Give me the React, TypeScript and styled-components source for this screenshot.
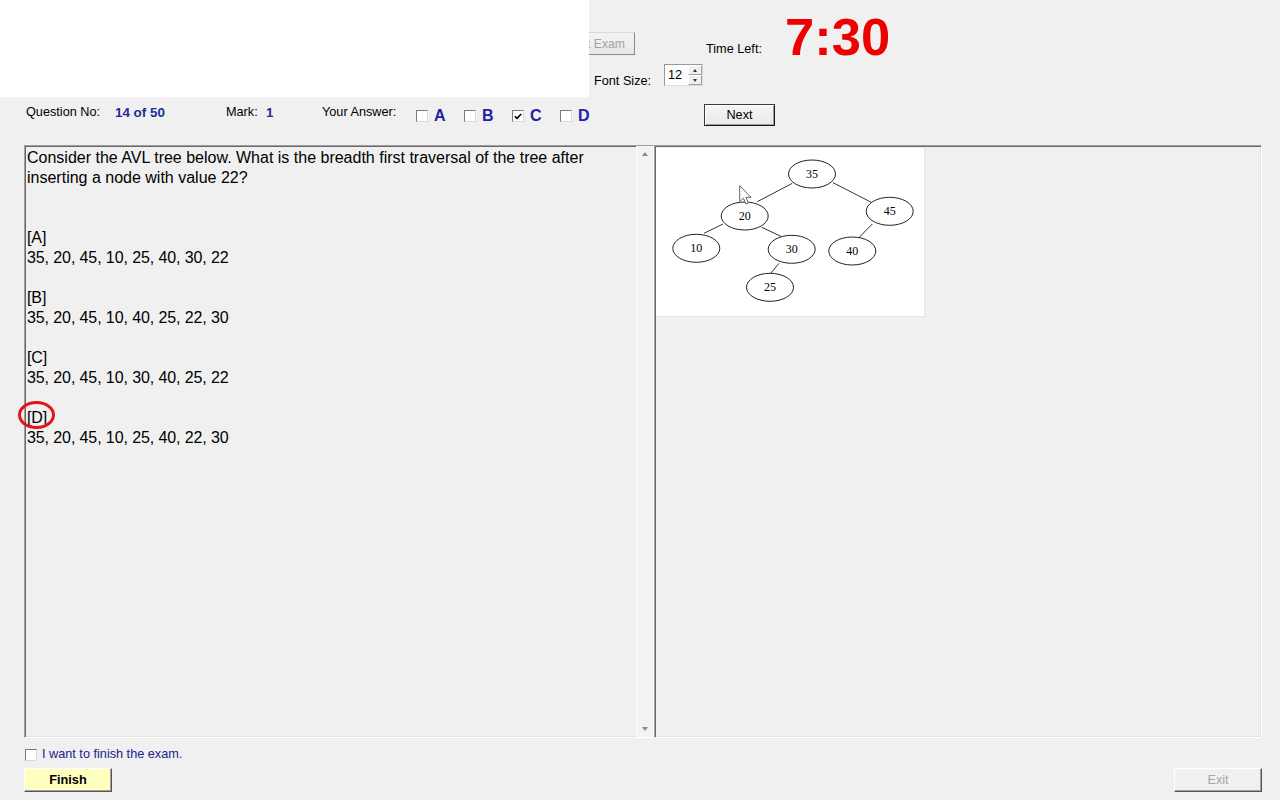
import React from "react";
import styled, { createGlobalStyle } from "styled-components";

const Global = createGlobalStyle`
  html, body { margin: 0; padding: 0; background: #f0f0f0; }
  body { font-family: "Liberation Sans", Arial, sans-serif; color: #000; }
`;

const Page = styled.div`
  width: 1280px;
  height: 800px;
  background: #f0f0f0;
  display: flex;
  flex-direction: column;
  overflow: hidden;
  font-size: 12.7px;
`;

const TopBar = styled.div`
  display: flex;
  height: 97px;
  flex: none;
`;

const WhitePanel = styled.div`
  width: 589px;
  height: 97px;
  background: #fff;
  flex: none;
`;

const ControlsA = styled.div`
  width: 117px;
  display: flex;
  flex-direction: column;
  flex: none;
`;

const StartClip = styled.div`
  margin-top: 32px;
  height: 23px;
  width: 46px;
  box-sizing: border-box;
  overflow: hidden;
  display: flex;
  justify-content: flex-end;
  align-items: center;
  padding-right: 9px;
  border-top: 1px solid #d8d8d8;
  border-right: 1px solid #8a8a8a;
  border-bottom: 1px solid #8a8a8a;
  background: linear-gradient(#f3f3f3, #e8e8e8);
  color: #a3a3a3;
  font-size: 12.2px;
  white-space: nowrap;
`;

const FontRow = styled.div`
  display: flex;
  align-items: flex-start;
  margin-top: 9px;
`;

const FontLabel = styled.div`
  width: 75px;
  box-sizing: border-box;
  padding-left: 5px;
  margin-top: 10px;
  line-height: 15px;
`;

const Spinner = styled.div`
  width: 39px;
  height: 22px;
  box-sizing: border-box;
  border: 1px solid;
  border-color: #9a9a9a #dcdcdc #dcdcdc #9a9a9a;
  background: #fff;
  display: flex;
`;

const SpinText = styled.div`
  flex: 1;
  padding-left: 3px;
  line-height: 20px;
`;

const SpinButtons = styled.div`
  width: 14px;
  display: flex;
  flex-direction: column;
`;

const SpinBtn = styled.div`
  flex: 1;
  display: flex;
  align-items: center;
  justify-content: center;
  background: #f0f0f0;
  border: 1px solid;
  border-color: #fff #a0a0a0 #a0a0a0 #fff;
`;

const Tri = styled.div<{ $down?: boolean }>`
  width: 0;
  height: 0;
  border-left: 2.5px solid transparent;
  border-right: 2.5px solid transparent;
  ${(p) => (p.$down ? "border-top: 3px solid #333;" : "border-bottom: 3px solid #333;")}
`;

const ControlsB = styled.div`
  display: flex;
  align-items: flex-start;
`;

const TimeLabel = styled.div`
  margin-top: 42px;
  width: 79px;
  line-height: 15px;
`;

const Clock = styled.div`
  margin-top: 11px;
  font-size: 52.5px;
  font-weight: bold;
  line-height: 52px;
  color: #ec0000;
`;

const AnswerBar = styled.div`
  display: flex;
  align-items: flex-start;
  height: 48px;
  flex: none;
  box-sizing: border-box;
  padding-top: 7px;
  padding-left: 26px;
`;

const Cell = styled.div<{ $w: number; $bold?: boolean; $blue?: boolean }>`
  width: ${(p) => p.$w}px;
  flex: none;
  line-height: 15px;
  margin-top: 1px;
  font-weight: ${(p) => (p.$bold ? "bold" : "normal")};
  font-size: ${(p) => (p.$bold ? "13.4px" : "12.7px")};
  color: ${(p) => (p.$blue ? "#1c2c9c" : "#000")};
`;

const Option = styled.div`
  width: 48px;
  flex: none;
  display: flex;
  align-items: flex-start;
`;

const Box = styled.div<{ $top?: number }>`
  width: 12px;
  height: 12px;
  box-sizing: border-box;
  margin-top: ${(p) => p.$top ?? 0}px;
  border: 1px solid;
  border-color: #7a7a7a #dadada #dadada #7a7a7a;
  background: #fff;
  display: flex;
  align-items: center;
  justify-content: center;
  flex: none;
`;

const Letter = styled.div`
  margin-left: 6px;
  margin-top: 3px;
  font-size: 16px;
  font-weight: bold;
  line-height: 18px;
  color: #1f22a3;
`;

const Spacer = styled.div<{ $w: number }>`
  width: ${(p) => p.$w}px;
  flex: none;
`;

const NextButton = styled.div`
  width: 71px;
  height: 22px;
  box-sizing: border-box;
  border: 1px solid;
  border-color: #3a3a3a #1a1a1a #1a1a1a #3a3a3a;
  box-shadow: inset 1px 1px 0 #fff, inset -1px -1px 0 #a0a0a0;
  background: linear-gradient(#f4f4f4, #eaeaea);
  display: flex;
  align-items: center;
  justify-content: center;
`;

const Panels = styled.div`
  display: flex;
  margin-left: 24px;
  height: 593px;
  flex: none;
`;

const Frame = styled.div<{ $w: number }>`
  width: ${(p) => p.$w}px;
  box-sizing: border-box;
  border-style: solid;
  border-width: 1px;
  border-color: #a0a0a0 #fff #fff #a0a0a0;
  box-shadow: inset 1px 1px 0 #696969, inset -1px -1px 0 #e3e3e3;
  display: flex;
  flex: none;
`;

const TextArea = styled.div`
  flex: 1;
  padding: 2px 0 0 2px;
  font-size: 16px;
  line-height: 20px;
`;

const Question = styled.div`
  margin-bottom: 40px;
`;

const Choice = styled.div`
  margin-bottom: 20px;
  letter-spacing: -0.1px;
`;

const Marked = styled.span`
  position: relative;
`;

const RedRing = styled.span`
  position: absolute;
  left: -9px;
  top: -8px;
  width: 37px;
  height: 28px;
  box-sizing: border-box;
  border: 3.5px solid #e3141c;
  border-radius: 50%;
`;

const ScrollBar = styled.div`
  width: 16px;
  flex: none;
  display: flex;
  flex-direction: column;
  justify-content: space-between;
  align-items: center;
  padding: 6px 0 6px;
  background: #f3f3f3;
  border-left: 1px solid #fbfbfb;
`;

const ScrollArrow = styled.div<{ $down?: boolean }>`
  width: 0;
  height: 0;
  border-left: 3.5px solid transparent;
  border-right: 3.5px solid transparent;
  ${(p) => (p.$down ? "border-top: 4px solid #8a8a8a;" : "border-bottom: 4px solid #8a8a8a;")}
`;

const Picture = styled.div`
  margin: 2px 0 0 1px;
  width: 268px;
  height: 168px;
  background: #fff;
  border-right: 1px solid #e4e4e4;
  border-bottom: 1px solid #e4e4e4;
  flex: none;
`;

const Footer = styled.div`
  display: flex;
  flex-direction: column;
  padding-left: 24px;
  padding-right: 18px;
  margin-top: 10px;
`;

const FinishCheck = styled.div`
  display: flex;
  align-items: center;
  margin-left: 1px;
  height: 13px;
`;

const FinishText = styled.span`
  margin-left: 5px;
  color: #23218e;
  line-height: 15px;
`;

const ButtonRow = styled.div`
  display: flex;
  justify-content: space-between;
  margin-top: 7px;
`;

const ClassicButton = styled.div<{ $w: number; $yellow?: boolean; $disabled?: boolean }>`
  width: ${(p) => p.$w}px;
  height: 24px;
  box-sizing: border-box;
  border: 1px solid;
  border-color: #fff #555 #555 #fff;
  box-shadow: inset -1px -1px 0 #a0a0a0;
  background: ${(p) => (p.$yellow ? "#ffffc0" : "#f0f0f0")};
  color: ${(p) => (p.$disabled ? "#a6a6a6" : "#000")};
  font-weight: ${(p) => (p.$yellow ? "bold" : "normal")};
  display: flex;
  align-items: center;
  justify-content: center;
`;

const Check = () => (
  <svg width="8" height="7" viewBox="0 0 8 7">
    <path d="M0.8 3.2 L3 5.4 L7.2 1" fill="none" stroke="#000" strokeWidth="1.6" />
  </svg>
);

type NodeT = { x: number; y: number; v: string };
const nodes: NodeT[] = [
  { x: 156, y: 26, v: "35" },
  { x: 88.7, y: 68, v: "20" },
  { x: 233.7, y: 63.3, v: "45" },
  { x: 40.3, y: 100.3, v: "10" },
  { x: 135.7, y: 101.3, v: "30" },
  { x: 196.3, y: 103, v: "40" },
  { x: 114, y: 139.3, v: "25" },
];
const edges = [
  [136.3, 35.3, 101.3, 53.7],
  [177, 34.7, 215.3, 54.3],
  [67, 76, 48, 85.3],
  [105.7, 79.3, 125.7, 88.7],
  [216.3, 76, 202.3, 90.3],
  [123, 115.3, 114.7, 125.3],
];

const Tree = () => (
  <svg width="268" height="168" viewBox="0 0 268 168">
    {edges.map((e, i) => (
      <line key={i} x1={e[0]} y1={e[1]} x2={e[2]} y2={e[3]} stroke="#333" strokeWidth="1" />
    ))}
    {nodes.map((n) => (
      <g key={n.v}>
        <ellipse cx={n.x} cy={n.y} rx="23.5" ry="14" fill="#fff" stroke="#222" strokeWidth="1" />
        <text
          x={n.x}
          y={n.y + 4}
          textAnchor="middle"
          fontFamily="'Liberation Serif', serif"
          fontSize="12"
          fill="#000"
        >
          {n.v}
        </text>
      </g>
    ))}
    <path
      d="M83.7 37.7 L83.7 53.7 L87.4 50.2 L90 56 L92.4 55 L89.9 49.3 L95 49.3 Z"
      fill="#fff"
      stroke="#666"
      strokeWidth="1"
    />
  </svg>
);

const options = [
  { k: "A", v: "35, 20, 45, 10, 25, 40, 30, 22" },
  { k: "B", v: "35, 20, 45, 10, 40, 25, 22, 30" },
  { k: "C", v: "35, 20, 45, 10, 30, 40, 25, 22" },
  { k: "D", v: "35, 20, 45, 10, 25, 40, 22, 30" },
];

export default function App() {
  return (
    <>
      <Global />
      <Page>
        <TopBar>
          <WhitePanel />
          <ControlsA>
            <StartClip>Start Exam</StartClip>
            <FontRow>
              <FontLabel>Font Size:</FontLabel>
              <Spinner>
                <SpinText>12</SpinText>
                <SpinButtons>
                  <SpinBtn>
                    <Tri />
                  </SpinBtn>
                  <SpinBtn>
                    <Tri $down />
                  </SpinBtn>
                </SpinButtons>
              </Spinner>
            </FontRow>
          </ControlsA>
          <ControlsB>
            <TimeLabel>Time Left:</TimeLabel>
            <Clock>7:30</Clock>
          </ControlsB>
        </TopBar>

        <AnswerBar>
          <Cell $w={89}>Question No:</Cell>
          <Cell $w={111} $bold $blue>
            14 of 50
          </Cell>
          <Cell $w={40}>Mark:</Cell>
          <Cell $w={56} $bold $blue>
            1
          </Cell>
          <Cell $w={94}>Your Answer:</Cell>
          {["A", "B", "C", "D"].map((l) => (
            <Option key={l}>
              <Box $top={6}>{l === "C" && <Check />}</Box>
              <Letter>{l}</Letter>
            </Option>
          ))}
          <Spacer $w={96} />
          <NextButton>Next</NextButton>
        </AnswerBar>

        <Panels>
          <Frame $w={630}>
            <TextArea>
              <Question>
                Consider the AVL tree below. What is the breadth first traversal of the tree after
                <br />
                inserting a node with value 22?
              </Question>
              {options.map((o) => (
                <Choice key={o.k}>
                  <div>
                    {o.k === "D" ? (
                      <Marked>
                        [D]
                        <RedRing />
                      </Marked>
                    ) : (
                      `[${o.k}]`
                    )}
                  </div>
                  <div>{o.v}</div>
                </Choice>
              ))}
            </TextArea>
            <ScrollBar>
              <ScrollArrow />
              <ScrollArrow $down />
            </ScrollBar>
          </Frame>
          <Frame $w={608}>
            <Picture>
              <Tree />
            </Picture>
          </Frame>
        </Panels>

        <Footer>
          <FinishCheck>
            <Box />
            <FinishText>I want to finish the exam.</FinishText>
          </FinishCheck>
          <ButtonRow>
            <ClassicButton $w={88} $yellow>
              Finish
            </ClassicButton>
            <ClassicButton $w={88} $disabled>
              Exit
            </ClassicButton>
          </ButtonRow>
        </Footer>
      </Page>
    </>
  );
}
